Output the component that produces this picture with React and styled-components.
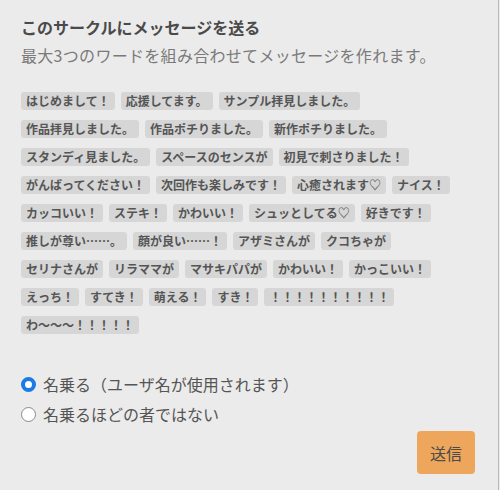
import React, { useState } from 'react';
import styled, { createGlobalStyle } from 'styled-components';

const words = [
  'はじめまして！',
  '応援してます。',
  'サンプル拝見しました。',
  '作品拝見しました。',
  '作品ポチりました。',
  '新作ポチりました。',
  'スタンディ見ました。',
  'スペースのセンスが',
  '初見で刺さりました！',
  'がんばってください！',
  '次回作も楽しみです！',
  '心癒されます♡',
  'ナイス！',
  'カッコいい！',
  'ステキ！',
  'かわいい！',
  'シュッとしてる♡',
  '好きです！',
  '推しが尊い……。',
  '顔が良い……！',
  'アザミさんが',
  'クコちゃが',
  'セリナさんが',
  'リラママが',
  'マサキパパが',
  'かわいい！',
  'かっこいい！',
  'えっち！',
  'すてき！',
  '萌える！',
  'すき！',
  '！！！！！！！！！！',
  'わ〜〜〜！！！！！',
];

const options = ['名乗る（ユーザ名が使用されます）', '名乗るほどの者ではない'];

const GlobalStyle = createGlobalStyle`
  body {
    margin: 0;
    background: #ebebeb;
    font-family: "Noto Sans CJK JP", "Noto Sans", sans-serif;
  }
`;

const Panel = styled.div`
  box-sizing: border-box;
  width: 499px;
  min-height: 490px;
  padding: 16px 23px 0 21px;
  border-right: 1px solid #b8b8b8;
  background: #ebebeb;
`;

const Title = styled.h2`
  margin: 0;
  font-size: 16px;
  line-height: 22px;
  font-weight: 700;
  color: #4a4a4a;
`;

const Lead = styled.p`
  margin: 6px 0 0;
  font-size: 16px;
  line-height: 22px;
  color: #7a7a7a;
  letter-spacing: 0.3px;
`;

const WordList = styled.div`
  display: flex;
  flex-wrap: wrap;
  gap: 10px 6px;
  margin-top: 26px;
`;

const Word = styled.span`
  display: inline-block;
  height: 18px;
  padding: 0 5px;
  border-radius: 3px;
  background: ${({ $picked }) => ($picked ? '#c4c4c4' : '#d6d6d6')};
  font-size: 12px;
  line-height: 18px;
  font-weight: 700;
  color: #555;
  white-space: nowrap;
  cursor: pointer;
`;

const Options = styled.div`
  margin-top: 35px;
  display: flex;
  flex-direction: column;
`;

const Option = styled.label`
  display: flex;
  align-items: center;
  gap: 7px;
  height: 30px;
  font-size: 16px;
  color: #555;
  cursor: pointer;
`;

const Dot = styled.span`
  box-sizing: border-box;
  width: 15px;
  height: 15px;
  border-radius: 50%;
  background: #fff;
  border: ${({ $on }) => ($on ? '4.5px solid #1a7ae6' : '1.5px solid #8a8a8a')};
`;

const Footer = styled.div`
  display: flex;
  justify-content: flex-end;
  margin-top: 2px;
`;

const Send = styled.button`
  height: 43px;
  padding: 0 13px;
  border: none;
  border-radius: 4px;
  background: #eda65c;
  font-family: inherit;
  font-size: 16px;
  color: #4a4a4a;
  cursor: pointer;
`;

export default function App() {
  const [mode, setMode] = useState(0);
  const [picked, setPicked] = useState([]);

  function toggle(i) {
    setPicked((p) =>
      p.includes(i) ? p.filter((x) => x !== i) : p.length < 3 ? [...p, i] : p
    );
  }

  return (
    <>
      <GlobalStyle />
      <Panel>
        <Title>このサークルにメッセージを送る</Title>
        <Lead>最大3つのワードを組み合わせてメッセージを作れます。</Lead>
        <WordList>
          {words.map((w, i) => (
            <Word key={i} $picked={picked.includes(i)} onClick={() => toggle(i)}>
              {w}
            </Word>
          ))}
        </WordList>
        <Options>
          {options.map((o, i) => (
            <Option key={o} onClick={() => setMode(i)}>
              <Dot $on={mode === i} />
              {o}
            </Option>
          ))}
        </Options>
        <Footer>
          <Send>送信</Send>
        </Footer>
      </Panel>
    </>
  );
}
